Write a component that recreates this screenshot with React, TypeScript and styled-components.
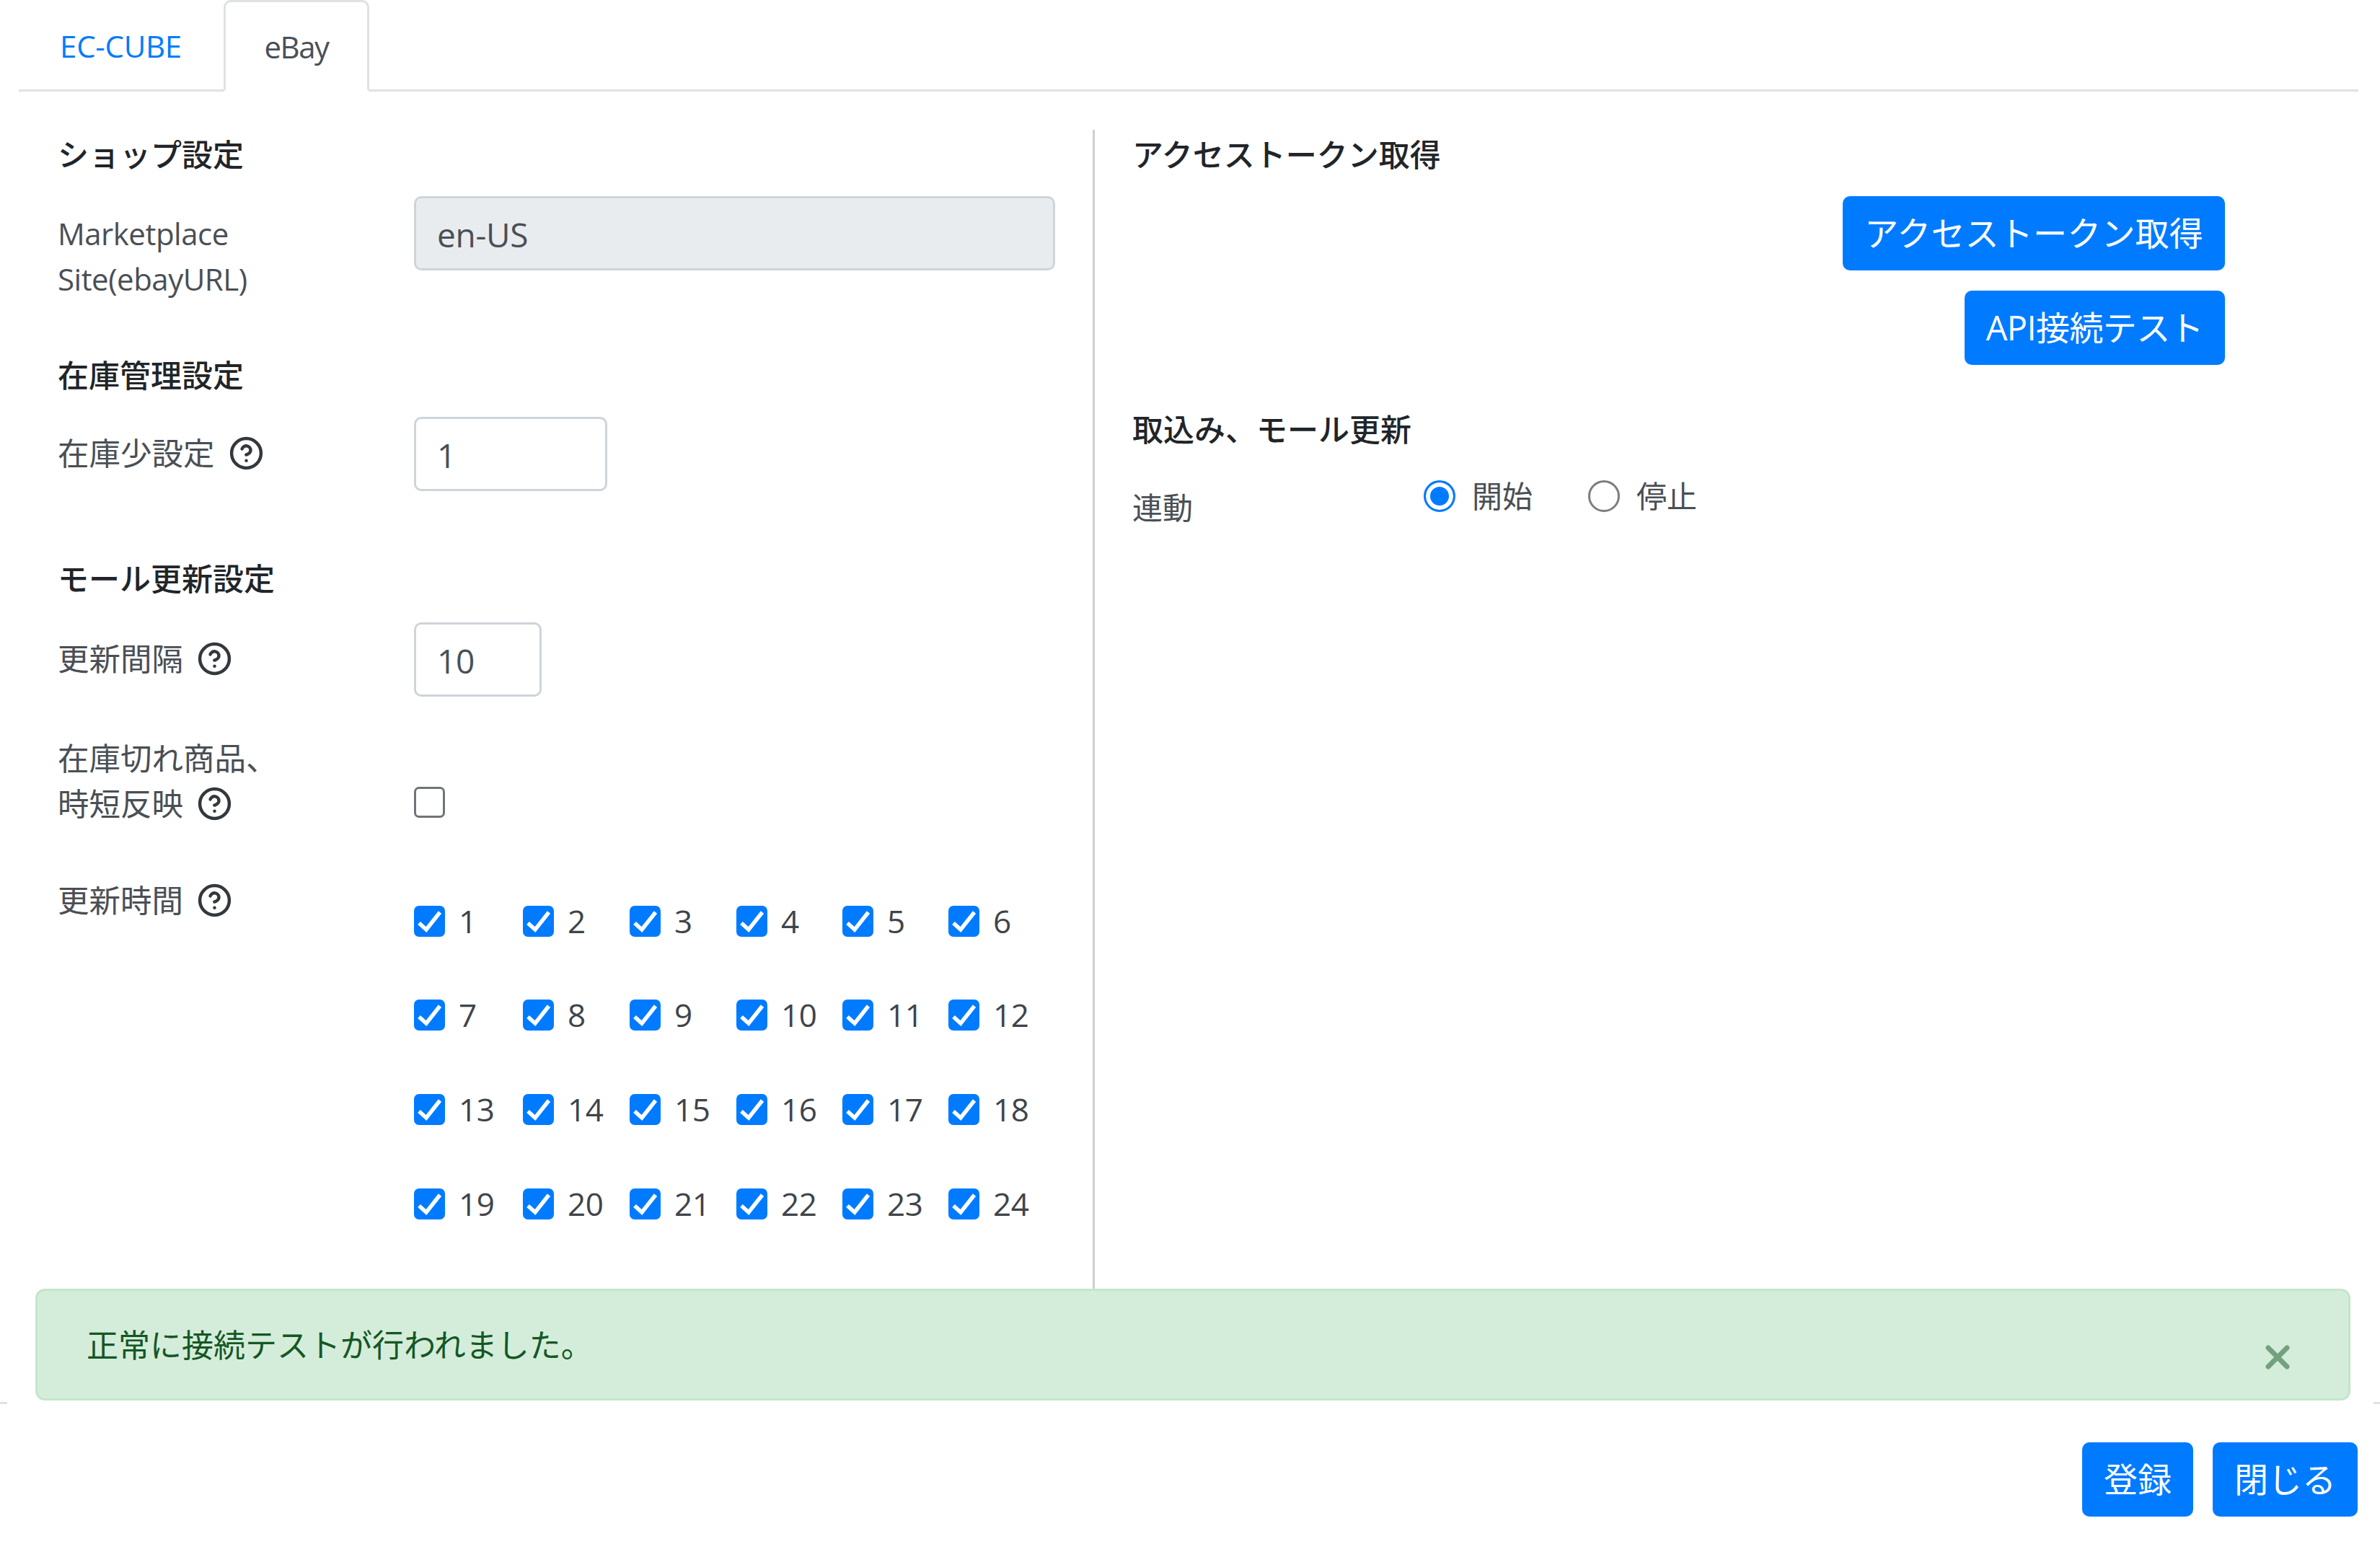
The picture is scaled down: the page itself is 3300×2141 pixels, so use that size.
import styled, { createGlobalStyle } from "styled-components";
import { CircleHelp, X } from "lucide-react";

const GlobalStyle = createGlobalStyle`
  html, body {
    margin: 0;
    padding: 0;
    background: #fff;
  }
  body {
    font-family: "Open Sans", "Noto Sans CJK JP", sans-serif;
    font-size: 42px;
    line-height: 63px;
    color: #4a4f55;
  }
  * {
    box-sizing: border-box;
  }
`;

const Page = styled.div`
  position: relative;
  width: 3300px;
  height: 2141px;
  overflow: hidden;
`;

const TabBar = styled.div`
  display: flex;
  height: 127px;
  margin: 0 30px 0 26px;
  padding-left: 25px;
  border-bottom: 3px solid #dee2e6;
`;

const Tab = styled.div<{ $active?: boolean }>`
  display: flex;
  align-items: center;
  justify-content: center;
  width: ${(p) => (p.$active ? "202px" : "259px")};
  height: ${(p) => (p.$active ? "127px" : "124px")};
  padding: ${(p) => (p.$active ? "2px 0 0" : "2px 26px 0 0")};
  letter-spacing: ${(p) => (p.$active ? "-1.5px" : "-0.3px")};
  color: ${(p) => (p.$active ? "#495057" : "#007bff")};
  background: #fff;
  border: 3px solid ${(p) => (p.$active ? "#dee2e6" : "transparent")};
  border-bottom-color: ${(p) => (p.$active ? "#fff" : "transparent")};
  border-radius: 10px 10px 0 0;
`;

const Body = styled.div`
  display: flex;
  height: 1817px;
  padding-top: 53px;
`;

const LeftColumn = styled.div`
  width: 1518px;
  padding: 3px 0 0 80px;
  border-right: 3px solid #cfcfcf;
`;

const RightColumn = styled.div`
  flex: 1;
  padding: 3px 215px 0 52px;
`;

const SectionTitle = styled.div<{ $top?: number }>`
  margin-top: ${(p) => p.$top ?? 0}px;
  font-size: 43px;
  font-weight: 500;
  color: #212529;
`;

const Row = styled.div<{ $top: number; $align?: string }>`
  display: flex;
  align-items: ${(p) => p.$align ?? "center"};
  margin-top: ${(p) => p.$top}px;
`;

const Label = styled.div<{ $top?: number }>`
  display: flex;
  flex-shrink: 0;
  flex-wrap: wrap;
  align-items: center;
  align-self: flex-start;
  width: 494px;
  padding-top: ${(p) => p.$top ?? 19}px;
`;

const LabelLine = styled.span`
  display: flex;
  align-items: center;
  width: 100%;
  font-size: 43.5px;
`;

const LatinLine = styled.span`
  width: 100%;
  letter-spacing: -0.5px;
`;

const HelpIcon = styled(CircleHelp)`
  flex-shrink: 0;
  width: 49px;
  height: 49px;
  margin-left: 19px;
  color: #33383d;
`;

const TextInput = styled.input<{ $width: number }>`
  width: ${(p) => p.$width}px;
  height: 103px;
  padding: 2px 29px 0;
  font: inherit;
  font-size: 46px;
  letter-spacing: -0.3px;
  color: #495057;
  background: #fff;
  border: 3px solid #ced4da;
  border-radius: 10px;
  outline: none;

  &:read-only {
    background: #e9ecef;
  }
`;

const CheckBox = styled.span<{ $checked?: boolean; $top?: number }>`
  display: flex;
  flex-shrink: 0;
  align-items: center;
  justify-content: center;
  width: 43px;
  height: 43px;
  margin-top: ${(p) => p.$top ?? 0}px;
  background: ${(p) => (p.$checked ? "#007bff" : "#fff")};
  border: 3px solid ${(p) => (p.$checked ? "#007bff" : "#6f7478")};
  border-radius: 7px;
`;

const CheckMark = styled.svg`
  flex-shrink: 0;
  width: 43px;
  height: 43px;
`;

const HourGrid = styled.div`
  display: grid;
  grid-template-columns: 151px 148px 148px 147px 147px 147px;
  grid-auto-rows: 130.6px;
`;

const HourItem = styled.div`
  display: flex;
  gap: 19px;
  align-items: center;
  font-size: 44px;
  letter-spacing: -0.4px;
  color: #3f444a;
`;

const ButtonStack = styled.div`
  display: flex;
  flex-direction: column;
  gap: 28px;
  align-items: flex-end;
  margin-top: 26px;
`;

const Button = styled.button<{ $spacing?: number }>`
  height: 103px;
  padding: 0 30px;
  font: inherit;
  font-size: 47px;
  letter-spacing: ${(p) => p.$spacing ?? 0}px;
  color: #fff;
  background: #007bff;
  border: none;
  border-radius: 10px;
`;

const LinkRow = styled.div`
  display: flex;
  align-items: flex-start;
  margin-top: 45px;
`;

const LinkLabel = styled.div`
  width: 404px;
`;

const RadioItem = styled.div`
  display: flex;
  gap: 23px;
  align-items: center;
  margin-right: 77px;
  margin-top: -16px;
`;

const Radio = styled.span<{ $checked?: boolean }>`
  display: block;
  width: 44px;
  height: 44px;
  background: ${(p) => (p.$checked ? "#007bff" : "#fff")};
  border: 3px solid ${(p) => (p.$checked ? "#007bff" : "#7d7d7d")};
  border-radius: 50%;
  box-shadow: ${(p) => (p.$checked ? "inset 0 0 0 6px #fff" : "none")};
`;

const AlertHolder = styled.div`
  position: absolute;
  top: 1787px;
  left: 10px;
  width: 3281px;
  height: 162px;
  padding: 0 32px 0 39px;
  background: #fff;
`;

const Alert = styled.div`
  display: flex;
  align-items: center;
  height: 155px;
  padding: 0 72px 0 68px;
  font-size: 44px;
  color: #155724;
  background: #d4edda;
  border: 3px solid #c3e6cb;
  border-radius: 13px;
`;

const AlertText = styled.div`
  flex: 1;
  padding-top: 2px;
`;

const CloseIcon = styled(X)`
  width: 52px;
  height: 52px;
  margin-top: 34px;
  color: #155724;
  opacity: 0.5;
`;

const Footer = styled.div`
  display: flex;
  gap: 27px;
  justify-content: flex-end;
  height: 197px;
  padding: 53px 31px 0 0;
  border-top: 3px solid #dee2e6;
`;

const hours = Array.from({ length: 24 }, (_, i) => i + 1);

const App = () => {
  return (
    <Page>
      <GlobalStyle />
      <TabBar>
        <Tab>EC-CUBE</Tab>
        <Tab $active>eBay</Tab>
      </TabBar>
      <Body>
        <LeftColumn>
          <SectionTitle>ショップ設定</SectionTitle>
          <Row $top={26} $align="flex-start">
            <Label $top={20}>
              <LatinLine>Marketplace</LatinLine>
              <LatinLine>Site(ebayURL)</LatinLine>
            </Label>
            <TextInput $width={889} readOnly defaultValue="en-US" />
          </Row>
          <SectionTitle $top={71}>在庫管理設定</SectionTitle>
          <Row $top={26}>
            <Label>
              <LabelLine>
                在庫少設定
                <HelpIcon strokeWidth={2.2} />
              </LabelLine>
            </Label>
            <TextInput $width={268} defaultValue="1" />
          </Row>
          <SectionTitle $top={90}>モール更新設定</SectionTitle>
          <Row $top={29}>
            <Label>
              <LabelLine>
                更新間隔
                <HelpIcon strokeWidth={2.2} />
              </LabelLine>
            </Label>
            <TextInput $width={177} defaultValue="10" />
          </Row>
          <Row $top={54} $align="flex-start">
            <Label $top={0}>
              <LabelLine>在庫切れ商品、</LabelLine>
              <LabelLine>
                時短反映
                <HelpIcon strokeWidth={2.2} />
              </LabelLine>
            </Label>
            <CheckBox $top={71} />
          </Row>
          <Row $top={66} $align="flex-start">
            <Label $top={5}>
              <LabelLine>
                更新時間
                <HelpIcon strokeWidth={2.2} />
              </LabelLine>
            </Label>
            <HourGrid>
              {hours.map((h) => (
                <HourItem key={h}>
                  <CheckBox $checked>
                    <CheckMark viewBox="0 0 43 43">
                      <path d="M7 24 L17 33 L36 9" fill="none" stroke="#fff" strokeWidth="5.5" />
                    </CheckMark>
                  </CheckBox>
                  {h}
                </HourItem>
              ))}
            </HourGrid>
          </Row>
        </LeftColumn>
        <RightColumn>
          <SectionTitle>アクセストークン取得</SectionTitle>
          <ButtonStack>
            <Button $spacing={0.2}>アクセストークン取得</Button>
            <Button $spacing={-0.6}>API接続テスト</Button>
          </ButtonStack>
          <SectionTitle $top={58}>取込み、モール更新</SectionTitle>
          <LinkRow>
            <LinkLabel>連動</LinkLabel>
            <RadioItem>
              <Radio $checked />
              開始
            </RadioItem>
            <RadioItem>
              <Radio />
              停止
            </RadioItem>
          </LinkRow>
        </RightColumn>
      </Body>
      <Footer>
        <Button>登録</Button>
        <Button>閉じる</Button>
      </Footer>
      <AlertHolder>
        <Alert>
          <AlertText>正常に接続テストが行われました。</AlertText>
          <CloseIcon strokeWidth={3.2} />
        </Alert>
      </AlertHolder>
    </Page>
  );
};

export default App;
